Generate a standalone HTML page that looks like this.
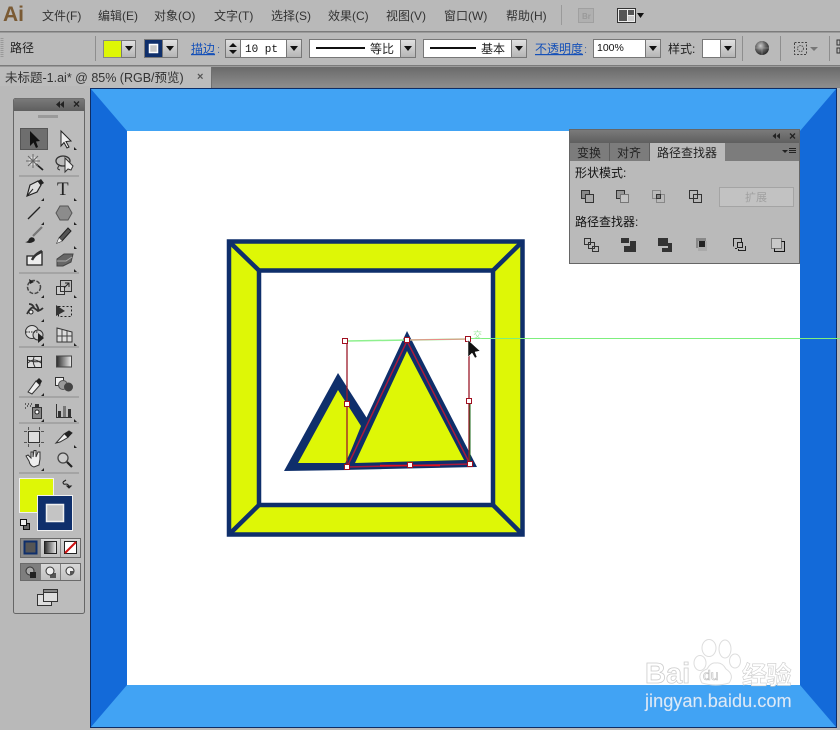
<!DOCTYPE html>
<html><head><meta charset="utf-8"><style>
html,body{margin:0;padding:0;background:#b9b9b9;width:840px;height:730px;overflow:hidden}
svg{display:block;font-family:"Liberation Sans","Noto Sans CJK SC",sans-serif;filter:blur(.3px)}
.m{font-size:12px;fill:#333}
.t{font-size:12px;fill:#222}
.l{font-size:12px;fill:#1450b8;text-decoration:underline}
</style></head><body>
<svg width="840" height="730" viewBox="0 0 840 730" xmlns="http://www.w3.org/2000/svg">
<defs>
<linearGradient id="tb" x1="0" y1="0" x2="0" y2="1"><stop offset="0" stop-color="#6a6a6a"/><stop offset="1" stop-color="#8f8f8f"/></linearGradient>
<linearGradient id="hd" x1="0" y1="0" x2="0" y2="1"><stop offset="0" stop-color="#7a7a7a"/><stop offset="1" stop-color="#5f5f5f"/></linearGradient>
<linearGradient id="gr" x1="0" y1="0" x2="1" y2="0"><stop offset="0" stop-color="#2a2a2a"/><stop offset="1" stop-color="#eee"/></linearGradient>
<linearGradient id="dd" x1="0" y1="0" x2="0" y2="1"><stop offset="0" stop-color="#e2e2e2"/><stop offset="1" stop-color="#b4b4b4"/></linearGradient>
<linearGradient id="btn" x1="0" y1="0" x2="0" y2="1"><stop offset="0" stop-color="#d8d8d8"/><stop offset="1" stop-color="#c0c0c0"/></linearGradient>
<radialGradient id="ball" cx=".4" cy=".35" r=".7"><stop offset="0" stop-color="#ccc"/><stop offset=".5" stop-color="#666"/><stop offset="1" stop-color="#222"/></radialGradient>
</defs>

<rect width="840" height="730" fill="#b9b9b9"/>

<!-- menu bar -->
<text x="3" y="21" font-size="21" font-weight="bold" fill="#7a5a34">Ai</text>
<text class="m" x="42" y="20">文件(F)</text>
<text class="m" x="98" y="20">编辑(E)</text>
<text class="m" x="154" y="20">对象(O)</text>
<text class="m" x="214" y="20">文字(T)</text>
<text class="m" x="271" y="20">选择(S)</text>
<text class="m" x="328" y="20">效果(C)</text>
<text class="m" x="386" y="20">视图(V)</text>
<text class="m" x="444" y="20">窗口(W)</text>
<text class="m" x="506" y="20">帮助(H)</text>
<rect x="561" y="5" width="1" height="20" fill="#9a9a9a"/>
<rect x="578.500" y="8.500" width="15" height="14" fill="#b0b0b0" stroke="#a0a0a0"/>
<text x="582" y="19" font-size="8" font-weight="bold" fill="#9a9a9a">Br</text>
<rect x="617.500" y="8.500" width="18" height="14" fill="#eee" stroke="#333"/>
<rect x="619" y="10" width="8" height="11" fill="#555"/><rect x="628" y="10" width="6" height="5" fill="#555"/><rect x="628" y="16" width="6" height="5" fill="#ccc"/>
<path d="M637 13h7l-3.500 5z" fill="#111"/>
<rect y="31" width="840" height="1.500" fill="#7b7b7b"/>

<!-- control bar -->
<rect y="33" width="840" height="32" fill="#bababa"/>
<path d="M2 38v20" stroke="#999" stroke-width="3" stroke-dasharray="1 1"/>
<text class="t" x="10" y="52">路径</text>
<rect x="95" y="36" width="1" height="25" fill="#8e8e8e"/>
<rect x="103.500" y="40.500" width="18" height="17" fill="#def706" stroke="#888"/>
<rect x="121.500" y="40.500" width="14" height="17" fill="url(#dd)" stroke="#777"/><path d="M125 46h8l-4 5z" fill="#111"/>
<rect x="144.500" y="39.500" width="18" height="18" fill="#0f2f6b" stroke="#777"/><rect x="149.500" y="44.500" width="8" height="8" fill="#c8c8c8" stroke="#fff" stroke-width="1.500"/>
<rect x="162.500" y="39.500" width="15" height="18" fill="url(#dd)" stroke="#777"/><path d="M166 46h8l-4 5z" fill="#111"/>
<text class="l" x="191" y="53" font-size="12.500" style="text-decoration:underline dotted">描边</text><text x="217" y="53" font-size="11" fill="#4a6aa8">:</text>
<rect x="225.500" y="39.500" width="15" height="18" fill="url(#dd)" stroke="#777"/><path d="M229 47l4-4 4 4zM229 50l4 4 4-4z" fill="#111"/>
<rect x="240.500" y="39.500" width="46" height="18" fill="#fff" stroke="#777"/>
<text x="245" y="52" font-family="Liberation Mono" font-size="11" fill="#111">10 pt</text>
<rect x="286.500" y="39.500" width="15" height="18" fill="url(#dd)" stroke="#777"/><path d="M290 46h8l-4 5z" fill="#111"/>
<rect x="309.500" y="39.500" width="91" height="18" fill="#fff" stroke="#777"/>
<rect x="316" y="47" width="49" height="2" fill="#111"/>
<text x="370" y="53" font-size="12" fill="#222">等比</text>
<rect x="400.500" y="39.500" width="15" height="18" fill="url(#dd)" stroke="#777"/><path d="M404 46h8l-4 5z" fill="#111"/>
<rect x="423.500" y="39.500" width="88" height="18" fill="#fff" stroke="#777"/>
<rect x="430" y="47" width="46" height="2" fill="#111"/>
<text x="481" y="53" font-size="12" fill="#222">基本</text>
<rect x="511.500" y="39.500" width="15" height="18" fill="url(#dd)" stroke="#777"/><path d="M515 46h8l-4 5z" fill="#111"/>
<text class="l" x="535" y="53" font-size="12.500" style="text-decoration:underline dotted">不透明度</text><text x="584" y="53" font-size="11" fill="#4a6aa8">:</text>
<rect x="593.500" y="39.500" width="52" height="18" fill="#fff" stroke="#777"/>
<text x="597" y="51" font-size="10.500" fill="#111">100%</text>
<rect x="645.500" y="39.500" width="15" height="18" fill="url(#dd)" stroke="#777"/><path d="M649 46h8l-4 5z" fill="#111"/>
<text x="668" y="53" font-size="12" fill="#222">样式:</text>
<rect x="702.500" y="39.500" width="18" height="18" fill="#fff" stroke="#777"/>
<rect x="720.500" y="39.500" width="15" height="18" fill="url(#dd)" stroke="#777"/><path d="M724 46h8l-4 5z" fill="#111"/>
<rect x="742" y="36" width="1" height="25" fill="#8e8e8e"/>
<circle cx="762" cy="48" r="7" fill="url(#ball)"/><path d="M762 41v14M755 48h14" stroke="#aaa" stroke-width=".7" opacity=".6"/>
<rect x="780" y="36" width="1" height="25" fill="#8e8e8e"/>
<rect x="794.500" y="42.500" width="12" height="12" fill="none" stroke="#444" stroke-dasharray="2 1.500"/><circle cx="800.500" cy="48.500" r="3" fill="none" stroke="#555" stroke-dasharray="1.500 1"/>
<path d="M810 47h8l-4 4z" fill="#777"/>
<rect x="829" y="36" width="1" height="25" fill="#8e8e8e"/>
<path d="M837 40h3v5h-3zM837 48h3v5h-3z" fill="none" stroke="#333"/>
<rect y="65" width="840" height="1.500" fill="#7b7b7b"/>

<!-- tabs bar -->
<rect y="67" width="840" height="21" fill="url(#tb)"/>
<rect x="0" y="67" width="212" height="21" fill="#bcbcbc"/>
<rect x="211" y="67" width="1" height="21" fill="#707070"/>
<text x="5" y="82" font-size="12.500" fill="#333">未标题-1.ai* @ 85% (RGB/预览)</text>
<text x="197" y="80" font-size="11" font-weight="bold" fill="#555">×</text>
<rect y="86" width="90" height="644" fill="#b9b9b9"/>
<rect y="87" x="212" width="628" height="1" fill="#888"/>

<!-- canvas -->
<rect x="90" y="88" width="747" height="640" fill="#0e2d66"/>
<rect x="91" y="89" width="745" height="638" fill="#41a3f4"/>
<path d="M91 89L127 131V685L91 727Z" fill="#136ad9"/>
<path d="M836 89L800 131V685L836 727Z" fill="#136ad9"/>
<rect x="127" y="131" width="673" height="554" fill="#fff"/>
<rect x="837" y="88" width="3" height="642" fill="#b9b9b9"/>
<rect x="90" y="728" width="750" height="2" fill="#b9b9b9"/>

<!-- frame -->
<g stroke="#0f2f6b" stroke-width="4.500">
<path d="M229 241.500H522.500V534.500H229Z" fill="#def706"/>
<rect x="259" y="270.500" width="234" height="234.500" fill="#fff"/>
<path d="M229 241.500L259 270.500M522.500 241.500L493 270.500M229 534.500L259 505M522.500 534.500L493 505" fill="none"/>
</g>

<!-- triangles -->
<path d="M338 373L284 471L350 470L370 423Z" fill="#0f2f6b"/>
<path d="M338 390L298 463L346 463L361 426Z" fill="#def706"/>
<path d="M407 331L342 470L477 467Z" fill="#0f2f6b"/>
<path d="M407 351L355 463L464 460Z" fill="#def706"/>

<!-- selection -->
<path d="M407 341L347 467L470 464Z" fill="none" stroke="#a81a3e" stroke-width="1.500"/>
<path d="M347 341V467M469 339V464" fill="none" stroke="#9c1a2a" stroke-width="1.300"/>
<path d="M470 401V464" stroke="#1a6a1a" stroke-width="1"/>
<path d="M347 341L468 339" stroke="#8ef08e" stroke-width="1.500"/>
<path d="M468 338.500H840" stroke="#7def7d" stroke-width="1"/>
<path d="M407 340L468 339" stroke="#e88" stroke-width="1"/>
<path d="M380 465.500H440" stroke="#e01020" stroke-width="1.500"/>
<g fill="#fff" stroke="#a01020" stroke-width="1">
<rect x="342.500" y="338.500" width="5" height="5"/><rect x="465.500" y="336.500" width="5" height="5"/>
<rect x="344.500" y="464.500" width="5" height="5"/><rect x="467.500" y="461.500" width="5" height="5"/>
<rect x="404.500" y="337.500" width="5" height="5"/><rect x="344.500" y="401.500" width="5" height="5"/>
<rect x="466.500" y="398.500" width="5" height="5"/><rect x="407.500" y="462.500" width="5" height="5"/>
</g>
<text x="473" y="338" font-size="9" fill="#9fe89f">交</text>
<path d="M468 340V357L472 353L475 358L477 357L475 352L480 351Z" fill="#111" stroke="#fff" stroke-width=".5"/>

<!-- tools panel -->
<rect x="13.500" y="98.500" width="71" height="515" rx="2" fill="#bcbcbc" stroke="#666"/>
<path d="M14 111V101Q14 98.500 17 98.500H81Q84.500 98.500 84.500 101V111Z" fill="url(#hd)"/>
<path d="M60 101l-4 3.500 4 3.500zM64 101l-4 3.500 4 3.500z" fill="#222"/>
<path d="M74 101.500l5 5M79 101.500l-5 5" stroke="#222" stroke-width="1.400"/>
<path d="M39 115v3M41 115v3M43 115v3M45 115v3M47 115v3M49 115v3M51 115v3M53 115v3M55 115v3M57 115v3" stroke="#777"/>
<rect x="20.500" y="128.500" width="27" height="21" fill="#6e6e6e" stroke="#555"/>
<path d="M19 176H79M19 273H79M19 347H79M19 397H79M19 423H79M19 473H79" stroke="#8c8c8c"/>
<!-- selection -->
<path d="M30 131V146L33.500 142.500L36 148L38 147L36 141.500L40 141Z" fill="#111"/>
<path d="M61 131V146L64 142.500L67 148L69 147L66 141.500L71 141Z" fill="#eee" stroke="#222"/>
<!-- wand / lasso -->
<path d="M36 164L43 170" stroke="#222" stroke-width="1.800"/>
<circle cx="33" cy="161" r="4.500" fill="#ddd"/><path d="M33 154v14M26 161h14M28 156l10 10M38 156l-10 10" stroke="#666" stroke-width="1"/>
<ellipse cx="63" cy="161" rx="7" ry="5" fill="none" stroke="#333" stroke-width="1.300"/>
<path d="M65 158V172L68 169L71 170L73 166Z" fill="#eee" stroke="#333"/><path d="M59 166q-3 3 1 4" fill="none" stroke="#333"/>
<!-- pen / type -->
<path d="M27 196L30 185L38 181L41 185L37 192Z" fill="#ddd" stroke="#222" stroke-width="1.200"/><path d="M38 181l3-2 3 4-3 2z" fill="#222"/><path d="M27 196l6-7" stroke="#222"/>
<text x="57" y="195" font-family="Liberation Serif" font-size="19" fill="#222">T</text>
<!-- line / hex -->
<path d="M28 219L40 207" stroke="#222" stroke-width="1.300"/>
<path d="M60 206H68L72 213L68 220H60L56 213Z" fill="#8c8c8c" stroke="#555"/>
<!-- brush / pencil -->
<path d="M33 236L42 227" stroke="#777" stroke-width="2.200"/><path d="M25 242q3 0 4-3q2-3 5-1q2 3-1 4q-3 2-8 0z" fill="#222"/>
<path d="M57 243L59 238L68 228L71 231L62 241Z" fill="#555" stroke="#222"/><path d="M57 243l2-5 3 3z" fill="#eee"/>
<!-- blob / eraser -->
<path d="M27 256H35L42 252V265H27Z" fill="#eee" stroke="#222" stroke-width="1.300"/><path d="M32 260q3-6 10-9" stroke="#333" stroke-width="2.500" fill="none"/>
<path d="M57 259L64 254H73L71 262L63 266H57Z" fill="#666" stroke="#444"/><path d="M57 261H66L72 257" stroke="#aaa" fill="none"/>
<!-- rotate / scale -->
<circle cx="34" cy="287" r="6.500" fill="none" stroke="#444" stroke-width="1.500" stroke-dasharray="4 1.500"/><path d="M29 279l1 5 4-2z" fill="#222"/>
<rect x="56.500" y="286.500" width="8" height="8" fill="#ccc" stroke="#333"/><rect x="60.500" y="280.500" width="11" height="11" fill="none" stroke="#333"/><path d="M64 288l5-5M65 283h4v4" stroke="#222" fill="none"/>
<!-- warp / free transform -->
<path d="M27 314q4-8 7-6t4 3q3-1 5-3M29 304q4 0 5 4M36 304q2 3 3 7" fill="none" stroke="#333" stroke-width="1.800"/><circle cx="31" cy="312" r="2" fill="#eee" stroke="#222"/>
<rect x="58.500" y="306.500" width="13" height="10" fill="none" stroke="#222" stroke-dasharray="2 2"/><path d="M56 305L65 311L56 316Z" fill="#333"/>
<!-- shape builder / perspective -->
<circle cx="32" cy="332" r="6.500" fill="#ddd" stroke="#333"/><circle cx="38" cy="335" r="5" fill="#ccc" stroke="#333"/><path d="M26 332h12" stroke="#222" stroke-dasharray="1.500 1"/><path d="M38 333V343L44 338Z" fill="#222"/>
<path d="M57 328L72 332V342H57Z" fill="#ddd" stroke="#333"/><path d="M62 329V342M67 331V342M57 336H72" stroke="#444"/>
<!-- mesh / gradient -->
<rect x="27.500" y="356.500" width="14" height="11" fill="#ddd" stroke="#222"/><path d="M28 363q6-6 13 0M34 357q-2 5 1 10M28 360q7 3 13 1" stroke="#333" fill="none"/>
<rect x="56.500" y="356" width="15" height="11" fill="url(#gr)" stroke="#444"/>
<!-- eyedropper / blend -->
<path d="M28 392L36 381L40 385L32 394L28 392Z" fill="#eee" stroke="#333"/><path d="M36 381L39 378L42 381L40 385Z" fill="#222"/>
<rect x="55.500" y="377.500" width="8" height="8" fill="#eee" stroke="#333"/><circle cx="63" cy="385" r="4.500" fill="#999" stroke="#555"/><circle cx="68.500" cy="387" r="4.500" fill="#444"/>
<!-- spray / graph -->
<rect x="32.500" y="407.500" width="9" height="11" fill="#888" stroke="#333"/><circle cx="37" cy="412" r="2" fill="#fff" stroke="#222"/><rect x="35" y="404" width="4" height="3" fill="#333"/>
<path d="M25 404h1M28 404h1M31 404h1M27 406h1M30 406h1M25 408h1" stroke="#222" stroke-width="1.200"/>
<path d="M56.500 404V417.500H72" fill="none" stroke="#333"/><rect x="58" y="411" width="3" height="6" fill="#333"/><rect x="63" y="406" width="3" height="11" fill="#777"/><rect x="68" y="409" width="3" height="8" fill="#333"/>
<!-- artboard / slice -->
<rect x="28.500" y="431.500" width="11" height="11" fill="#ddd" stroke="#333"/><path d="M24 431.500h3M41 431.500h3M24 442.500h3M41 442.500h3M28.500 427v3M39.500 427v3M28.500 444v3M39.500 444v3" stroke="#555"/>
<path d="M56 443L64 434L69 431L72 433L67 438L60 442Z" fill="#eee" stroke="#333"/><path d="M64 434L69 431L72 433L68 438Z" fill="#222"/>
<!-- hand / zoom -->
<path d="M29 461L26 456L28 455L31 458V452L33 452V457L34 450.500L36 450.500V457L38 452L40 452V459L39 465L34 467Q30 466 29 461Z" fill="#eee" stroke="#333"/>
<circle cx="63" cy="458" r="5" fill="#ccc" stroke="#444" stroke-width="1.300"/><path d="M67 462L72 467" stroke="#222" stroke-width="2.200"/>
<!-- corner flyouts -->
<path fill="#222" d="M74 147v3h3zM44 198v3h-3zM74 198v3h3zM44 222v3h-3zM74 222v3h3zM74 246v3h3zM74 269v3h3zM44 295v3h-3zM74 295v3h3zM44 319v3h-3zM44 343v3h-3zM74 343v3h3zM44 393v3h-3zM44 419v3h-3zM74 419v3h3zM74 445v3h3zM44 468v3h-3z"/>
<!-- fill & stroke -->
<rect x="19.500" y="478.500" width="34" height="34" fill="#def706" stroke="#f0f0f0"/>
<rect x="37.500" y="495.500" width="35" height="35" fill="#0f2f6b" stroke="#f0f0f0"/>
<rect x="46.500" y="504.500" width="17" height="17" fill="#c4c4c4" stroke="#f0f0f0" stroke-width="1.500"/>
<path d="M63 482q0 3 3 2M66 484q3 0 3 4M63 482l3-2M69 488l-2-2 4 0z" fill="none" stroke="#222" stroke-width="1.100"/>
<rect x="23.500" y="523.500" width="6" height="6" fill="#666" stroke="#111"/><rect x="20.500" y="519.500" width="6" height="6" fill="#eee" stroke="#111"/>
<!-- color buttons -->
<rect x="20.500" y="538.500" width="60" height="19" fill="#888" stroke="#6a6a6a"/>
<rect x="41" y="539" width="19" height="18" fill="url(#btn)"/><rect x="61" y="539" width="19" height="18" fill="url(#btn)"/>
<rect x="24.500" y="541.500" width="12" height="12" fill="#555" stroke="#0f2f6b" stroke-width="2"/>
<rect x="44.500" y="541.500" width="12" height="12" fill="url(#gr)" stroke="#222"/>
<rect x="64.500" y="541.500" width="12" height="12" fill="#fff" stroke="#222"/><path d="M65 553L76 542" stroke="#d01010" stroke-width="2"/>
<!-- draw mode -->
<rect x="20.500" y="563.500" width="60" height="17" fill="#7e7e7e" stroke="#6a6a6a"/>
<rect x="41" y="564" width="19" height="16" fill="url(#btn)"/><rect x="61" y="564" width="19" height="16" fill="url(#btn)"/>
<circle cx="30" cy="571" r="4" fill="#aaa" stroke="#333"/><rect x="30" y="572" width="6" height="6" fill="#222"/>
<rect x="50" y="573" width="6" height="5" fill="#555"/><circle cx="50" cy="571" r="4" fill="#eee" stroke="#333"/>
<circle cx="70" cy="571" r="4" fill="#eee" stroke="#333"/><path d="M70 571h4a4 4 0 0 1-4 4z" fill="#555"/>
<!-- screen mode -->
<rect x="37.500" y="594.500" width="14" height="11" fill="#ddd" stroke="#333"/>
<rect x="43.500" y="589.500" width="14" height="12" fill="#ddd" stroke="#333"/>
<rect x="43.500" y="589.500" width="14" height="3" fill="#888" stroke="#333"/>

<!-- pathfinder panel -->
<rect x="569.500" y="129.500" width="230" height="134" fill="#bababa" stroke="#666"/>
<rect x="570" y="130" width="229" height="13" fill="url(#hd)"/>
<path d="M776 133l-3.500 3 3.500 3zM780 133l-3.500 3 3.500 3z" fill="#222"/>
<path d="M790 133.500l5 5M795 133.500l-5 5" stroke="#222" stroke-width="1.300"/>
<rect x="570" y="143" width="229" height="18" fill="#7c7c7c"/>
<rect x="609" y="143" width="1" height="18" fill="#5e5e5e"/><rect x="649" y="143" width="1" height="18" fill="#5e5e5e"/>
<rect x="650" y="143" width="75" height="18.500" fill="#bababa"/>
<text x="577" y="157" font-size="12" fill="#222">变换</text>
<text x="617" y="157" font-size="12" fill="#222">对齐</text>
<text x="657" y="157" font-size="12" fill="#222">路径查找器</text>
<path d="M782 150h6l-3 3z" fill="#222"/><path d="M789 148.500h7M789 150.500h7M789 152.500h7" stroke="#222"/>
<text x="575" y="177" font-size="12" fill="#111">形状模式:</text>
<text x="575" y="226" font-size="12" fill="#111">路径查找器:</text>
<g fill="none" stroke="#333">
<rect x="581.500" y="190.500" width="8" height="8" fill="#888"/><rect x="585.500" y="194.500" width="8" height="8" fill="#aaa"/>
<rect x="616.500" y="190.500" width="8" height="8" fill="#999"/><rect x="620.500" y="194.500" width="8" height="8" fill="#c4c4c4" stroke="#777"/>
<rect x="652.500" y="190.500" width="8" height="8" stroke="#888"/><rect x="656.500" y="194.500" width="8" height="8" stroke="#888"/><rect x="656.500" y="194.500" width="4" height="4" stroke="#333" fill="#888"/>
<rect x="689.500" y="190.500" width="8" height="8"/><rect x="693.500" y="194.500" width="8" height="8"/>
</g>
<rect x="719.500" y="187.500" width="74" height="19" fill="#c2c2c2" stroke="#a4a4a4"/>
<text x="745" y="201" font-size="11" fill="#a0a0a0">扩展</text>
<g fill="none" stroke="#333">
<rect x="584.500" y="238.500" width="6" height="6"/><rect x="588.500" y="242.500" width="6" height="6"/><rect x="592.500" y="246.500" width="6" height="5"/>
</g>
<path d="M621 238h8v5h-8zM630 241h6v11h-12v-6h6z" fill="#333"/>
<path d="M658 238h10v8h-10z" fill="#333"/><path d="M668 243h4v9h-10v-4h6z" fill="#333"/>
<rect x="696" y="238" width="10" height="10" fill="#888"/><rect x="698" y="241" width="9" height="10" fill="#aaa"/><rect x="699" y="241" width="6" height="6" fill="#222"/>
<g fill="none" stroke="#222">
<path d="M733.500 246.500V238.500H741.500V242M737 248.500H735M745.500 246V250.500H738.500V249"/><rect x="737.500" y="242.500" width="5" height="5"/>
<rect x="771.500" y="238.500" width="10" height="10" fill="#c8c8c8" stroke="#777"/>
<path d="M781.500 241.500H784.500V251.500H774.500V248.500" stroke="#111"/>
</g>

<!-- watermark -->
<text x="645" y="683" font-size="29" font-weight="bold" fill="#fff" fill-opacity=".85" stroke="#ccc" stroke-width=".8">Bai</text>
<ellipse cx="709" cy="648" rx="7" ry="8.500" fill="#fff" stroke="#ddd"/>
<ellipse cx="725" cy="649" rx="6" ry="9" fill="#fff" stroke="#ddd"/>
<ellipse cx="700" cy="663" rx="6" ry="7.500" fill="#fff" stroke="#ddd"/>
<ellipse cx="735" cy="661" rx="5.500" ry="7" fill="#fff" stroke="#ddd"/>
<path d="M702 683q-6-10 5-14q4-7 9-6q6-1 10 6q9 6 3 14q-13 4-27 0z" fill="#fff" stroke="#ddd"/>
<text x="703" y="680" font-size="14" fill="#fff" stroke="#bbb" stroke-width=".6">du</text>
<text x="742" y="684" font-size="25" font-weight="bold" fill="#fff" stroke="#ccc" stroke-width=".6" font-family="Noto Sans CJK SC" style="letter-spacing:-.5px">经验</text>
<text x="645" y="707" font-size="18.200" fill="#fff" fill-opacity=".8" stroke="#ccd" stroke-width=".2">jingyan.baidu.com</text>
</svg>
</body></html>
